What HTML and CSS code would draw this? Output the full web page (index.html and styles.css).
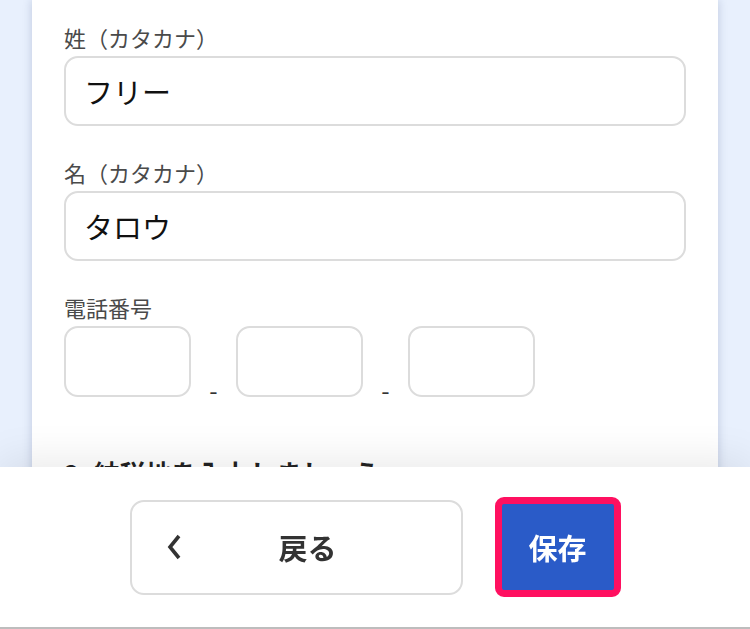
FILE: index.html
```html
<!DOCTYPE html>
<html lang="ja">
<head>
<meta charset="utf-8">
<link rel="stylesheet" href="styles.css">
</head>
<body>
<div class="page">
  <main class="card">
    <div class="field">
      <label class="label">姓（カタカナ）</label>
      <div class="input">フリー</div>
    </div>
    <div class="field">
      <label class="label">名（カタカナ）</label>
      <div class="input">タロウ</div>
    </div>
    <div class="field">
      <label class="label">電話番号</label>
      <div class="phone">
        <div class="input small"></div>
        <span class="dash">-</span>
        <div class="input small"></div>
        <span class="dash">-</span>
        <div class="input small"></div>
      </div>
    </div>
    <h2 class="section">2. 納税地を入力しましょう</h2>
    <div class="spacer"></div>
  </main>
</div>
<footer class="bar">
  <button class="back">
    <svg class="chev" width="16" height="26" viewBox="0 0 16 26"><path d="M13 2 L4 13 L13 24" fill="none" stroke="#333" stroke-width="3.6" stroke-linecap="butt" stroke-linejoin="miter"/></svg>
    <span class="back-text">戻る</span>
  </button>
  <button class="save"><span>保存</span></button>
</footer>
</body>
</html>
```
FILE: styles.css
```css
* { box-sizing: border-box; }
html, body {
  margin: 0;
  padding: 0;
}
body {
  background: #e8f0fd;
  font-family: "Noto Sans CJK JP", "Noto Sans", sans-serif;
  color: #222;
  overflow: hidden;
}
.page {
  padding: 0 32px;
}
.card {
  background: #fff;
  box-shadow: 0 0 9px rgba(40, 60, 110, 0.22);
  padding: 23px 32px 0 32px;
  min-height: 800px;
}
.field + .field {
  margin-top: 32px;
}
.label {
  display: block;
  font-size: 22px;
  line-height: 28px;
  color: #4a4a4a;
  margin-bottom: 5px;
}
.input {
  height: 70px;
  border: 2px solid #dcdcdc;
  border-radius: 14px;
  padding: 0 18px;
  display: flex;
  align-items: center;
  font-size: 29px;
  color: #111;
}
.phone {
  display: flex;
  align-items: flex-end;
}
.input.small {
  width: 127px;
  height: 71px;
}
.dash {
  width: 45px;
  text-align: center;
  font-size: 24px;
  line-height: 20px;
  margin-bottom: -3px;
  color: #333;
}
.section {
  margin: 58px 0 0 0;
  font-size: 26px;
  line-height: 36px;
  font-weight: 700;
  color: #222;
}
.spacer {
  height: 300px;
}
.bar {
  position: fixed;
  left: 0;
  right: 0;
  bottom: 0;
  height: 162px;
  background: #fff;
  border-bottom: 2px solid #bdbdbd;
  box-shadow: 0 -6px 40px rgba(0, 0, 0, 0.09);
  display: flex;
  justify-content: center;
  align-items: center;
  gap: 32px;
}
button {
  font-family: "Noto Sans CJK JP", "Noto Sans", sans-serif;
  margin: 0;
  cursor: pointer;
}
.back {
  width: 333px;
  height: 95px;
  background: #fff;
  border: 2px solid #dcdcdc;
  border-radius: 14px;
  display: flex;
  align-items: center;
  padding: 0 0 0 34px;
}
.chev {
  display: block;
  flex: none;
}
.back-text {
  margin-left: 97px;
  font-size: 29px;
  font-weight: 700;
  color: #333;
  line-height: 1;
}
.save {
  width: 126px;
  height: 100px;
  background: #2a5bc8;
  border: 7px solid #ff1060;
  border-radius: 9px;
  padding: 0;
  display: flex;
  align-items: center;
  justify-content: center;
  color: #fff;
  font-size: 29px;
  font-weight: 700;
  line-height: 1;
}
```
